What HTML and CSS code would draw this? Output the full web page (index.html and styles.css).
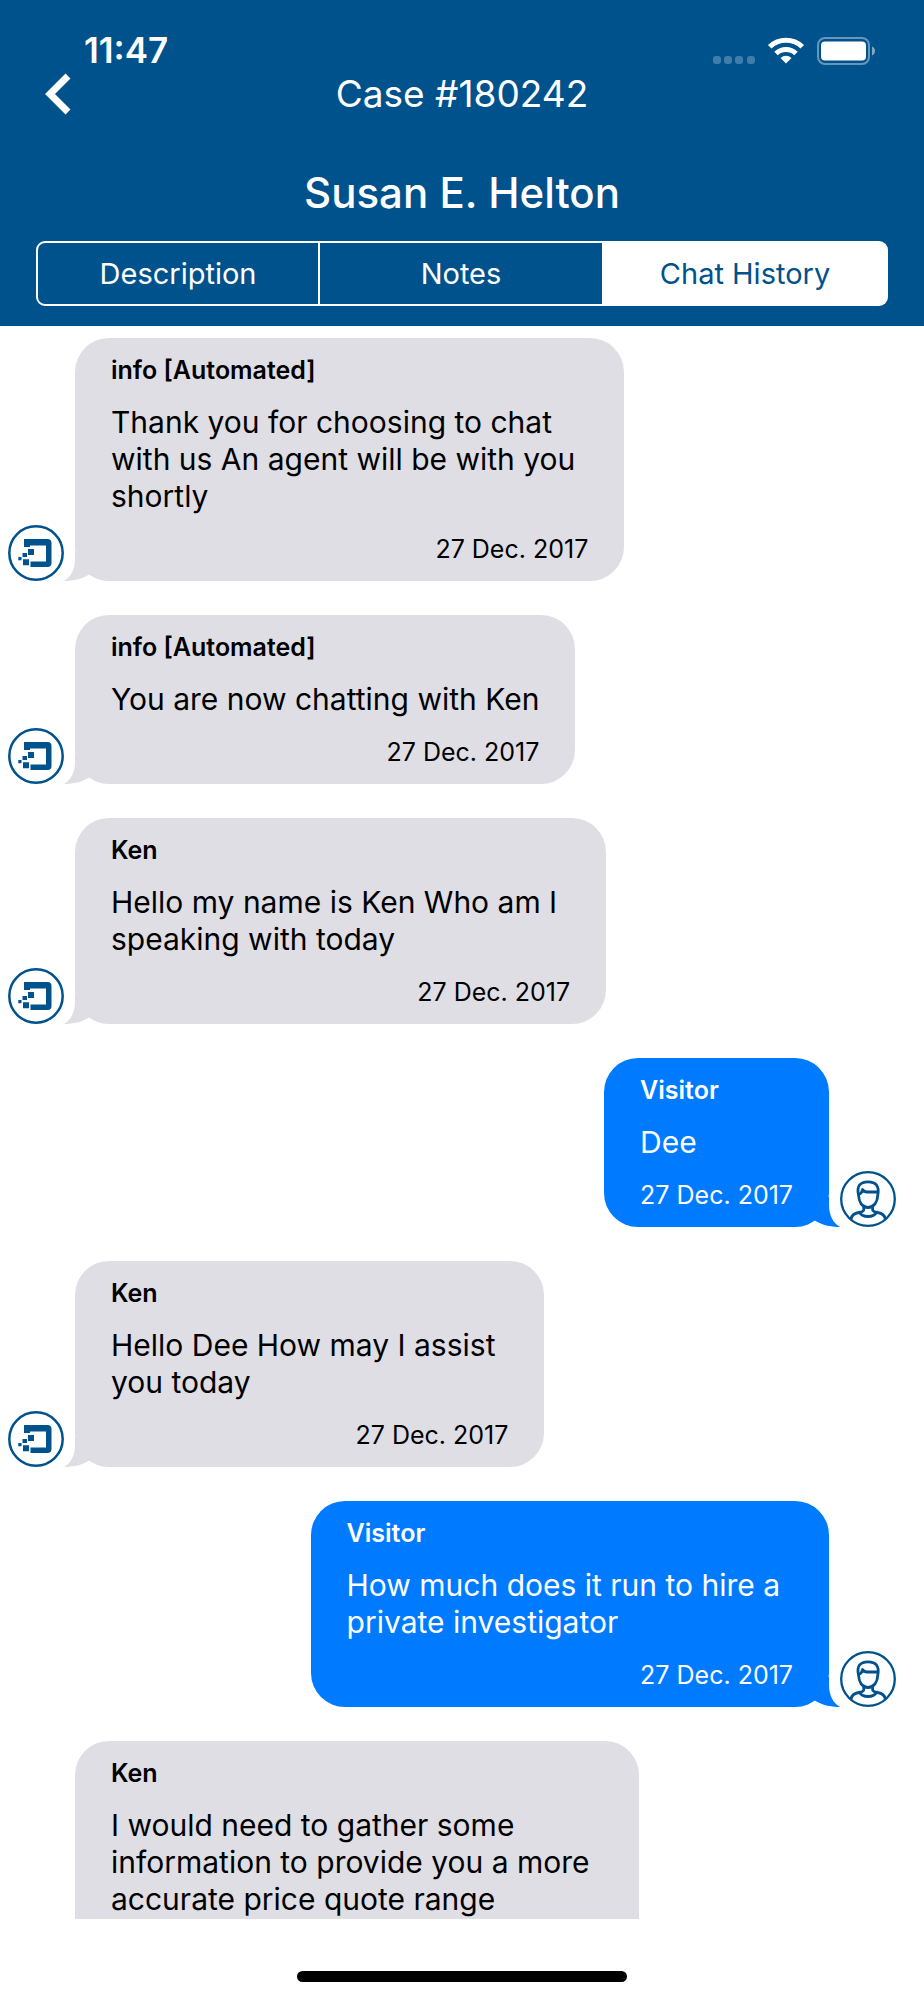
FILE: index.html
```html
<!DOCTYPE html>
<html lang="en">
<head>
<meta charset="utf-8">
<meta name="viewport" content="width=device-width, initial-scale=1">
<title>Case #180242</title>
<link rel="stylesheet" href="styles.css">
</head>
<body>
<svg class="defs" aria-hidden="true">
  <symbol id="agent" viewBox="0 0 56 56">
    <circle cx="28" cy="28" r="26.700" fill="#fff" stroke="#00528c" stroke-width="2.500"/>
    <g fill="#00528c">
      <path d="M16 14h23.500a4 4 0 0 1 4 4v20a4 4 0 0 1-4 4H22.500v-5.500H38V20.500H22V22h-6z"/>
      <path d="M20 24h6v6h-6zM14.500 28h4.500v4h-4.500zM10.300 32h3.200v3.200h-3.200zM15 34.200h6v6h-6z"/>
    </g>
  </symbol>
  <symbol id="visitor" viewBox="0 0 56 56">
    <circle cx="28" cy="28" r="26.800" fill="#fff" stroke="#00528c" stroke-width="2.300"/>
    <g fill="none" stroke="#00528c" stroke-width="2.800" stroke-linecap="round" stroke-linejoin="round">
      <path d="M18.500 24C16.500 15 20 10.800 28 10.800S39.500 15 37.800 24C37.500 31 34 36.500 28 36.500S19 31 18.500 24z"/>
      <path d="M18.600 23.500c2-.5 3.400-2 4-5 1.200 2 2.400 2.500 4.400 2.500h10.700"/>
      <path d="M23.800 35v3.500c0 2-2 2.500-5 3-4.800.8-7 2.500-7.800 6.500M32.600 35v3.500c0 2 2 2.500 5 3 4.800.8 7 2.500 7.800 6.500"/>
      <path d="M19.500 41.500c1.500 2.500 4.500 4 8.500 4s7-1.500 8.500-4"/>
    </g>
  </symbol>
  <symbol id="tail" viewBox="0 0 28 30">
    <path d="M11 0v8C11 18 7 26 0 30c10 0 18-2 26-7L28 0z" fill="currentColor"/>
  </symbol>
</svg>

<div class="app">
  <header class="header">
    <div class="status">
      <span class="time">11:47</span>
      <div class="status-icons">
        <svg class="signal" viewBox="0 0 42 8" aria-hidden="true">
          <g fill="#fff" opacity=".25"><rect width="8" height="8" rx="3"/><rect x="11" width="8" height="8" rx="3"/><rect x="22" width="8" height="8" rx="3"/><rect x="34" width="8" height="8" rx="3"/></g>
        </svg>
        <svg class="wifi" viewBox="0 0 36 27" aria-hidden="true">
          <path d="M18 26.500l-5.500-5.500a8 8 0 0 1 11 0z" fill="#fff"/>
          <path d="M8 16.500a14.500 14.500 0 0 1 20 0M1.700 9.800a23.500 23.500 0 0 1 32.600 0" fill="none" stroke="#fff" stroke-width="5"/>
        </svg>
        <svg class="battery" viewBox="0 0 60 28" aria-hidden="true">
          <rect x="1" y="1" width="51" height="26" rx="7" fill="none" stroke="#fff" stroke-width="2" opacity=".4"/>
          <rect x="4" y="4.500" width="45" height="19" rx="4" fill="#fff"/>
          <path d="M55 9.500c4 1 4 8 0 9z" fill="#fff" opacity=".5"/>
        </svg>
      </div>
    </div>
    <div class="nav">
      <button class="back" type="button" aria-label="Back">
        <svg viewBox="0 0 26 42" aria-hidden="true"><path d="M23 3L5 21l18 18" fill="none" stroke="#fff" stroke-width="7"/></svg>
      </button>
      <h1 class="title">Case #180242</h1>
    </div>
    <h2 class="client">Susan E. Helton</h2>
    <nav class="tabs">
      <button class="tab" type="button">Description</button>
      <button class="tab" type="button">Notes</button>
      <button class="tab active" type="button" aria-current="page">Chat History</button>
    </nav>
  </header>

  <main class="chat">
    <article class="row">
      <svg class="avatar" aria-hidden="true"><use href="#agent"/></svg>
      <div class="bubble">
        <svg class="tail" aria-hidden="true"><use href="#tail"/></svg>
        <h3 class="name">info [Automated]</h3>
        <p class="text multi">Thank you for choosing to chat<br>with us An agent will be with you<br>shortly</p>
        <time class="date" datetime="2017-12-27">27 Dec. 2017</time>
      </div>
    </article>
    <article class="row">
      <svg class="avatar" aria-hidden="true"><use href="#agent"/></svg>
      <div class="bubble">
        <svg class="tail" aria-hidden="true"><use href="#tail"/></svg>
        <h3 class="name">info [Automated]</h3>
        <p class="text">You are now chatting with Ken</p>
        <time class="date" datetime="2017-12-27">27 Dec. 2017</time>
      </div>
    </article>
    <article class="row">
      <svg class="avatar" aria-hidden="true"><use href="#agent"/></svg>
      <div class="bubble">
        <svg class="tail" aria-hidden="true"><use href="#tail"/></svg>
        <h3 class="name">Ken</h3>
        <p class="text multi">Hello my name is Ken Who am I<br>speaking with today</p>
        <time class="date" datetime="2017-12-27">27 Dec. 2017</time>
      </div>
    </article>
    <article class="row visitor">
      <svg class="avatar" aria-hidden="true"><use href="#visitor"/></svg>
      <div class="bubble">
        <svg class="tail" aria-hidden="true"><use href="#tail"/></svg>
        <h3 class="name">Visitor</h3>
        <p class="text">Dee</p>
        <time class="date" datetime="2017-12-27">27 Dec. 2017</time>
      </div>
    </article>
    <article class="row">
      <svg class="avatar" aria-hidden="true"><use href="#agent"/></svg>
      <div class="bubble">
        <svg class="tail" aria-hidden="true"><use href="#tail"/></svg>
        <h3 class="name">Ken</h3>
        <p class="text multi">Hello Dee How may I assist<br>you today</p>
        <time class="date" datetime="2017-12-27">27 Dec. 2017</time>
      </div>
    </article>
    <article class="row visitor">
      <svg class="avatar" aria-hidden="true"><use href="#visitor"/></svg>
      <div class="bubble">
        <svg class="tail" aria-hidden="true"><use href="#tail"/></svg>
        <h3 class="name">Visitor</h3>
        <p class="text multi">How much does it run to hire a<br>private investigator</p>
        <time class="date" datetime="2017-12-27">27 Dec. 2017</time>
      </div>
    </article>
    <article class="row">
      <svg class="avatar" aria-hidden="true"><use href="#agent"/></svg>
      <div class="bubble undated">
        <svg class="tail" aria-hidden="true"><use href="#tail"/></svg>
        <h3 class="name">Ken</h3>
        <p class="text multi">I would need to gather some<br>information to provide you a more<br>accurate price quote range</p>
      </div>
    </article>
  </main>

  <footer class="footer"><div class="home-bar"></div></footer>
</div>
</body>
</html>
```

FILE: styles.css
```css
* { box-sizing: border-box; }

body {
  margin: 0;
  background: #fff;
  color: #000;
  font-family: Inter, "Liberation Sans", sans-serif;
}

h1, h2, h3, p { margin: 0; }

button {
  margin: 0;
  padding: 0;
  border: 0;
  background: none;
  color: inherit;
  font: inherit;
}

.defs { position: absolute; width: 0; height: 0; }

.app {
  display: flex;
  flex-direction: column;
  height: 100vh;
}

.header {
  flex: none;
  padding: 30px 36px 20px;
  background: #00528c;
  color: #fff;
}

.status {
  display: flex;
  justify-content: space-between;
  align-items: center;
  height: 41px;
  padding: 0 11px 0 48px;
}

.time {
  font-size: 35px;
  line-height: 41px;
  font-weight: 600;
}

.status-icons { display: flex; align-items: center; gap: 13px; }
.signal { width: 42px; height: 8px; margin-top: 18px; }
.wifi { width: 36px; height: 27px; }
.battery { width: 60px; height: 28px; }

.nav {
  display: grid;
  grid-template-columns: 48px 1fr 48px;
  align-items: center;
  height: 46px;
}

.back { width: 40px; height: 42px; padding-left: 9px; }
.back svg { display: block; width: 26px; height: 42px; }

.title {
  font-size: 37px;
  line-height: 46px;
  font-weight: 400;
  text-align: center;
}

.client {
  margin-top: 50px;
  font-size: 42px;
  line-height: 52px;
  font-weight: 500;
  text-align: center;
}

.tabs {
  display: grid;
  grid-template-columns: repeat(3, 1fr);
  height: 65px;
  margin-top: 22px;
}

.tab {
  border: 2px solid #fff;
  border-left-width: 0;
  font-size: 29px;
  line-height: 34px;
}

.tab:first-child { border-left-width: 2px; border-radius: 9px 0 0 9px; }
.tab:last-child { border-radius: 0 9px 9px 0; }
.tab.active { background: #fff; color: #00528c; }

.chat {
  flex: 1;
  display: flex;
  flex-direction: column;
  gap: 34px;
  min-height: 0;
  padding: 12px 28px 0 8px;
  overflow-y: auto;
  scrollbar-width: none;
}

.row {
  flex: none;
  display: flex;
  align-items: flex-end;
  gap: 11px;
}

.row.visitor { flex-direction: row-reverse; }

.avatar { flex: none; width: 56px; height: 56px; }

.bubble {
  position: relative;
  display: flex;
  flex-direction: column;
  padding: 16px 36px;
  border-radius: 34px;
  background: #dfdee5;
}

.bubble.undated { padding-bottom: 80px; }

.visitor .bubble { background: #007aff; color: #fff; }

.tail {
  position: absolute;
  left: -11px;
  bottom: 0;
  width: 28px;
  height: 30px;
  color: #dfdee5;
}

.visitor .tail {
  left: auto;
  right: -11px;
  color: #007aff;
  transform: scaleX(-1);
}

.name {
  font-size: 25px;
  line-height: 32px;
  font-weight: 600;
}

.text {
  margin: 18px 0;
  font-size: 30px;
  line-height: 37px;
}

.text.multi { padding-right: 13px; }

.date {
  align-self: flex-end;
  font-size: 25px;
  line-height: 32px;
}

.footer {
  flex: none;
  display: flex;
  justify-content: center;
  align-items: flex-end;
  height: 81px;
  padding-bottom: 18px;
}

.home-bar {
  width: 330px;
  height: 11px;
  border-radius: 6px;
  background: #000;
}
```
